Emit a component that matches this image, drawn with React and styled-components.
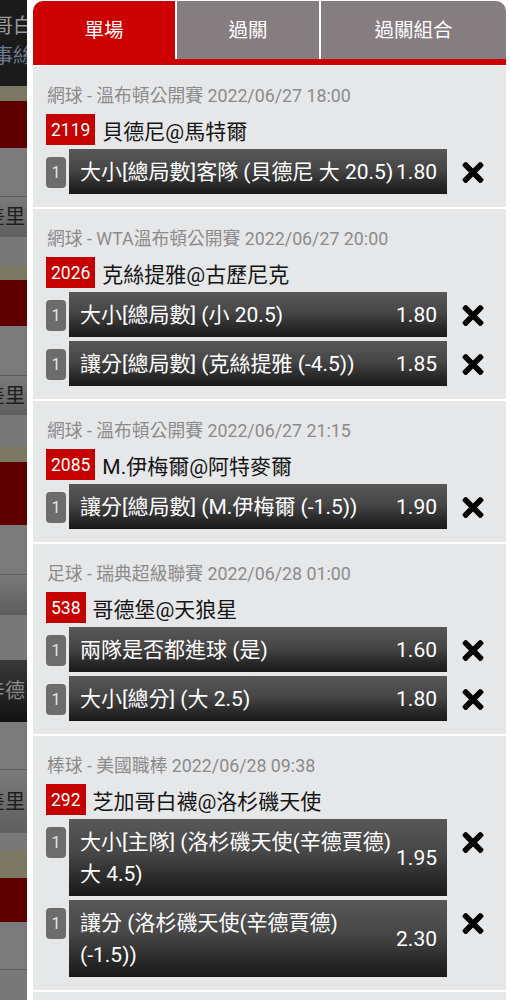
import React from "react";
import styled, { createGlobalStyle } from "styled-components";

const Global = createGlobalStyle`
  html, body { margin: 0; padding: 0; background: #ffffff; }
  body { font-family: "Roboto", "Noto Sans CJK TC", sans-serif; }
  * { box-sizing: border-box; }
`;

const Page = styled.div`
  display: flex;
  width: 510px;
  height: 1000px;
  overflow: hidden;
`;

const Backdrop = styled.div`
  width: 27px;
  flex: 0 0 27px;
  display: flex;
  flex-direction: column;
  overflow: hidden;
`;

const Block = styled.div`
  height: ${(p) => p.$h}px;
  flex: 0 0 auto;
  background: ${(p) => p.$bg};
  border-bottom: ${(p) => (p.$line ? "1px solid #5c5c5c" : "none")};
  display: flex;
  flex-direction: column;
  justify-content: ${(p) => (p.$top ? "flex-start" : "center")};
  align-items: ${(p) => (p.$right ? "flex-end" : "flex-start")};
  padding-top: ${(p) => (p.$top ? 11 : 0)}px;
  overflow: hidden;
`;

const BackText = styled.div`
  font-size: 20px;
  line-height: 30px;
  white-space: nowrap;
  color: ${(p) => p.$color};
  margin-left: ${(p) => (p.$right ? 0 : -7)}px;
  margin-right: ${(p) => (p.$right ? 2 : 0)}px;
`;

const Panel = styled.div`
  flex: 1;
  background: #ffffff;
  padding: 1px 4px 0 6px;
  display: flex;
  flex-direction: column;
`;

const Tabs = styled.div`
  display: grid;
  grid-template-columns: 142px 142px 1fr;
  column-gap: 2px;
  border-bottom: 6px solid #cc0000;
  margin-bottom: 1px;
`;

const Tab = styled.div`
  height: 58px;
  display: flex;
  align-items: center;
  justify-content: center;
  padding-bottom: 4px;
  font-size: 19.5px;
  color: #ffffff;
  background: ${(p) => (p.$active ? "#cc0000" : "#867d81")};
  &:first-child { border-top-left-radius: 10px; }
  &:last-child { border-top-right-radius: 10px; }
`;

const List = styled.div`
  display: flex;
  flex-direction: column;
  gap: 2px;
`;

const Card = styled.div`
  background: #e6e7e9;
  padding: 18px 22px 13px 13px;
  display: flex;
  flex-direction: column;
  min-height: ${(p) => (p.$min ? p.$min : 0)}px;
`;

const League = styled.div`
  font-size: 17.8px;
  line-height: 24px;
  color: #8b8b8b;
  padding-left: 1px;
  white-space: nowrap;
`;

const MatchRow = styled.div`
  display: flex;
  align-items: center;
  margin-top: 6px;
  height: 31px;
`;

const IdBadge = styled.div`
  background: #c40000;
  color: #ffffff;
  font-size: 17.5px;
  height: 31px;
  padding: 0 5px;
  display: flex;
  align-items: center;
`;

const Teams = styled.div`
  font-size: 21px;
  color: #141414;
  margin-left: 7px;
  white-space: nowrap;
`;

const BetRow = styled.div`
  display: flex;
  align-items: flex-start;
  margin-top: 4px;
`;

const NumBadge = styled.div`
  width: 20px;
  flex: 0 0 20px;
  height: 31px;
  margin-top: 8px;
  margin-right: 3px;
  border-radius: 4px;
  background: #6c6c6c;
  color: #e4e4e4;
  font-size: 16px;
  display: flex;
  align-items: center;
  justify-content: center;
`;

const Bar = styled.div`
  flex: 1;
  min-width: 0;
  display: flex;
  align-items: center;
  padding: 7px 10px 6px 11px;
  background: linear-gradient(#585858 0%, #464646 45%, #2c2c2c 75%, #191919 100%);
  color: #ffffff;
  font-size: 21px;
  line-height: 32px;
`;

const BetText = styled.div`
  flex: 1 1 0;
  min-width: 0;
`;

const Odds = styled.div`
  flex: 0 0 auto;
  text-align: right;
`;

const Close = styled.div`
  width: 37px;
  flex: 0 0 37px;
  display: flex;
  justify-content: flex-end;
  padding-top: 13px;
`;

const XIcon = () => (
  <svg width="22" height="21" viewBox="0 80 352 352" fill="#000000">
    <path d="M242.72 256l100.07-100.07c12.28-12.28 12.28-32.19 0-44.48l-22.24-22.24c-12.28-12.28-32.19-12.28-44.48 0L176 189.28 75.930 89.21c-12.28-12.28-32.19-12.28-44.48 0L9.21 111.45c-12.28 12.28-12.28 32.19 0 44.48L109.28 256 9.21 356.07c-12.28 12.28-12.28 32.19 0 44.48l22.24 22.24c12.28 12.28 32.2 12.28 44.48 0L176 322.72l100.07 100.07c12.28 12.28 32.2 12.28 44.48 0l22.24-22.24c12.28-12.28 12.28-32.19 0-44.48L242.72 256z" />
  </svg>
);

const backBlocks = [
  { h: 86, bg: "#1b1b1b", top: true, texts: [["哥白", "#9a9a9a"], ["事絲", "#6d7b8e"]] },
  { h: 15, bg: "#7b7864" },
  { h: 47, bg: "#5e0000" },
  { h: 49, bg: "#7a7a7a", line: true },
  { h: 40, bg: "linear-gradient(#7a7a7a, #5f5f5f)", right: true, texts: [["差里", "#1e1e1e"]] },
  { h: 28, bg: "#787878" },
  { h: 15, bg: "#7b7864" },
  { h: 46, bg: "#5e0000" },
  { h: 50, bg: "#7a7a7a", line: true },
  { h: 39, bg: "linear-gradient(#7a7a7a, #5f5f5f)", right: true, texts: [["差里", "#1e1e1e"]] },
  { h: 32, bg: "#787878" },
  { h: 15, bg: "#7b7864" },
  { h: 63, bg: "#5e0000" },
  { h: 50, bg: "#7a7a7a", line: true },
  { h: 40, bg: "linear-gradient(#7a7a7a, #5c5c5c)" },
  { h: 45, bg: "#787878" },
  { h: 62, bg: "linear-gradient(#3a3a3a, #111111)", right: true, texts: [["辛德", "#8a8a8a"]] },
  { h: 48, bg: "#7a7a7a", line: true },
  { h: 63, bg: "linear-gradient(#7a7a7a, #5f5f5f)", right: true, texts: [["差里", "#1e1e1e"]] },
  { h: 17, bg: "#787878" },
  { h: 28, bg: "#7b7864" },
  { h: 44, bg: "#5e0000" },
  { h: 48, bg: "#7a7a7a", line: true },
  { h: 40, bg: "#787878" },
];

const cards = [
  {
    league: "網球 - 溫布頓公開賽 2022/06/27 18:00",
    id: "2119",
    teams: "貝德尼@馬特爾",
    bets: [["大小[總局數]客隊 (貝德尼 大 20.5)", "1.80"]],
  },
  {
    league: "網球 - WTA溫布頓公開賽 2022/06/27 20:00",
    id: "2026",
    teams: "克絲提雅@古歷尼克",
    bets: [
      ["大小[總局數] (小 20.5)", "1.80"],
      ["讓分[總局數] (克絲提雅 (-4.5))", "1.85"],
    ],
  },
  {
    league: "網球 - 溫布頓公開賽 2022/06/27 21:15",
    id: "2085",
    teams: "M.伊梅爾@阿特麥爾",
    bets: [["讓分[總局數] (M.伊梅爾 (-1.5))", "1.90"]],
  },
  {
    league: "足球 - 瑞典超級聯賽 2022/06/28 01:00",
    id: "538",
    teams: "哥德堡@天狼星",
    bets: [
      ["兩隊是否都進球 (是)", "1.60"],
      ["大小[總分] (大 2.5)", "1.80"],
    ],
  },
  {
    league: "棒球 - 美國職棒 2022/06/28 09:38",
    id: "292",
    teams: "芝加哥白襪@洛杉磯天使",
    bets: [
      ["大小[主隊] (洛杉磯天使(辛德賈德) 大 4.5)", "1.95"],
      ["讓分 (洛杉磯天使(辛德賈德) (-1.5))", "2.30"],
    ],
  },
];

export default function App() {
  return (
    <>
      <Global />
      <Page>
        <Backdrop>
          {backBlocks.map((b, i) => (
            <Block key={i} $h={b.h} $bg={b.bg} $line={b.line} $right={b.right} $top={b.top}>
              {(b.texts || []).map(([t, c], j) => (
                <BackText key={j} $color={c} $right={b.right}>
                  {t}
                </BackText>
              ))}
            </Block>
          ))}
        </Backdrop>
        <Panel>
          <Tabs>
            <Tab $active>單場</Tab>
            <Tab>過關</Tab>
            <Tab>過關組合</Tab>
          </Tabs>
          <List>
            {cards.map((c, i) => (
              <Card key={i}>
                <League>{c.league}</League>
                <MatchRow>
                  <IdBadge>{c.id}</IdBadge>
                  <Teams>{c.teams}</Teams>
                </MatchRow>
                {c.bets.map(([text, odds], j) => (
                  <BetRow key={j}>
                    <NumBadge>1</NumBadge>
                    <Bar>
                      <BetText>{text}</BetText>
                      <Odds>{odds}</Odds>
                    </Bar>
                    <Close>
                      <XIcon />
                    </Close>
                  </BetRow>
                ))}
              </Card>
            ))}
            <Card $min={60} />
          </List>
        </Panel>
      </Page>
    </>
  );
}
